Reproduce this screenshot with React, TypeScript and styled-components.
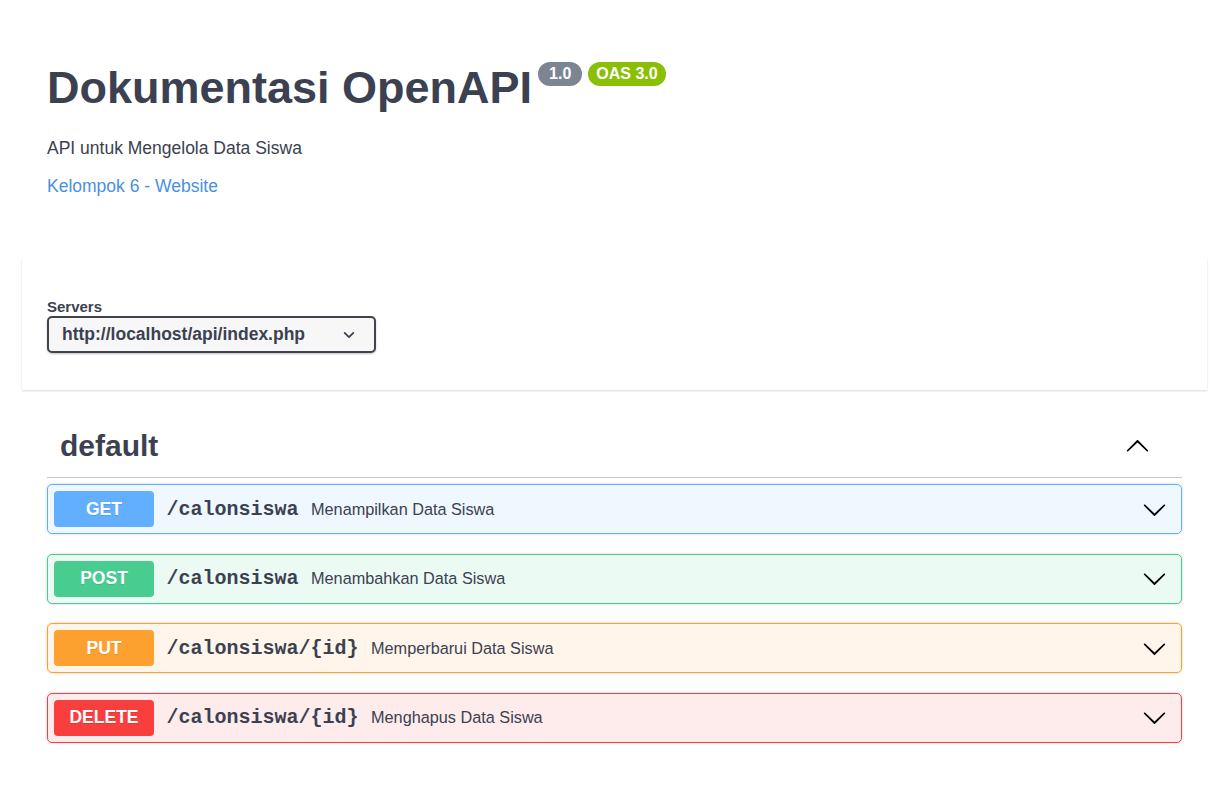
import React from "react";
import styled, { createGlobalStyle } from "styled-components";

const GlobalStyle = createGlobalStyle`
  html, body { margin: 0; padding: 0; background: #fff; }
  body { font-family: "Liberation Sans", Arial, sans-serif; color: #3b4151; }
  * { box-sizing: border-box; }
`;

const Page = styled.div`
  margin: 0 25px 0 22px;
  padding-bottom: 40px;
`;

const Info = styled.section`
  padding: 0 25px;
  margin: 62px 0 62px;
`;

const TitleRow = styled.div`
  display: flex;
  align-items: flex-start;
`;

const Title = styled.h1`
  margin: 0;
  font-size: 45px;
  line-height: 52px;
  font-weight: 700;
  color: #3b4151;
`;

const Badge = styled.span<{ $bg: string; $px: number }>`
  display: inline-block;
  margin-left: 6px;
  padding: 3px ${(p) => p.$px}px;
  border-radius: 57px;
  background: ${(p) => p.$bg};
  color: #fff;
  font-size: 16px;
  line-height: 18px;
  font-weight: 700;
`;

const Description = styled.p`
  margin: 24px 0 0;
  font-size: 17.5px;
  line-height: 20px;
  color: #3b4151;
`;

const Contact = styled.a`
  display: block;
  margin-top: 18px;
  font-size: 17.5px;
  line-height: 20px;
  color: #4990e2;
  text-decoration: none;
`;

const SchemeContainer = styled.section`
  background: #fff;
  padding: 40px 25px 37px;
  box-shadow: 0 1px 2px 0 rgba(0, 0, 0, 0.15);
`;

const ServersLabel = styled.div`
  font-size: 15px;
  line-height: 17px;
  font-weight: 700;
  color: #3b4151;
  margin-bottom: 1px;
`;

const Select = styled.div`
  display: flex;
  align-items: center;
  justify-content: space-between;
  width: 329px;
  height: 37px;
  padding: 0 18px 0 13px;
  border: 2px solid #41444e;
  border-radius: 5px;
  background: #f7f7f7;
  box-shadow: 0 1px 2px 0 rgba(0, 0, 0, 0.25);
  font-size: 17.5px;
  font-weight: 700;
  color: #3b4151;
`;

const Ops = styled.section`
  padding: 0 25px;
  margin-top: 25px;
`;

const TagHeader = styled.h3`
  display: flex;
  align-items: center;
  justify-content: space-between;
  height: 63px;
  margin: 0 0 6px;
  padding: 0 32px 0 13px;
  border-bottom: 1px solid rgba(59, 65, 81, 0.3);
  font-size: 30px;
  font-weight: 700;
  color: #3b4151;
`;

const OpBlock = styled.div<{ $color: string; $bg: string }>`
  display: flex;
  align-items: center;
  height: 50px;
  margin-bottom: 19.5px;
  padding: 0 14px 0 6px;
  border: 1px solid ${(p) => p.$color};
  border-radius: 5px;
  background: ${(p) => p.$bg};
  box-shadow: 0 0 3px 0 rgba(0, 0, 0, 0.19);
`;

const Method = styled.span<{ $color: string }>`
  flex: none;
  width: 100px;
  padding: 7.5px 0;
  border-radius: 4px;
  background: ${(p) => p.$color};
  color: #fff;
  text-align: center;
  font-size: 17.5px;
  line-height: 21px;
  font-weight: 700;
  text-shadow: 0 1px 0 rgba(0, 0, 0, 0.1);
`;

const Path = styled.span`
  padding: 0 12.5px;
  font-family: "Liberation Mono", "Courier New", monospace;
  font-size: 20px;
  font-weight: 700;
  color: #3b4151;
`;

const Summary = styled.span`
  flex: 1;
  font-size: 16.25px;
  color: #3b4151;
`;

const Arrow = styled.svg<{ $up?: boolean }>`
  flex: none;
  width: 25px;
  height: 25px;
  transform: ${(p) => (p.$up ? "rotate(180deg)" : "none")};
`;

const SmallChevron = styled.svg`
  width: 14px;
  height: 14px;
`;

const arrowPath =
  "M17.418 6.109c.272-.268.709-.268.979 0s.271.701 0 .969l-7.908 7.83c-.27.268-.707.268-.979 0l-7.908-7.83c-.27-.268-.27-.701 0-.969.271-.268.709-.268.979 0L10 13.25l7.418-7.141z";

const ArrowIcon = ({ up }: { up?: boolean }) => (
  <Arrow $up={up} viewBox="0 0 20 20" aria-hidden="true">
    <path d={arrowPath} fill="#000" />
  </Arrow>
);

type Op = {
  method: string;
  path: string;
  summary: string;
  color: string;
  bg: string;
};

const ops: Op[] = [
  { method: "GET", path: "/calonsiswa", summary: "Menampilkan Data Siswa", color: "#61affe", bg: "rgba(97,175,254,.1)" },
  { method: "POST", path: "/calonsiswa", summary: "Menambahkan Data Siswa", color: "#49cc90", bg: "rgba(73,204,144,.1)" },
  { method: "PUT", path: "/calonsiswa/{id}", summary: "Memperbarui Data Siswa", color: "#fca130", bg: "rgba(252,161,48,.1)" },
  { method: "DELETE", path: "/calonsiswa/{id}", summary: "Menghapus Data Siswa", color: "#f93e3e", bg: "rgba(249,62,62,.1)" },
];

export default function App() {
  return (
    <>
      <GlobalStyle />
      <Page>
        <Info>
          <TitleRow>
            <Title>Dokumentasi OpenAPI</Title>
            <Badge $bg="#7d8492" $px={11}>1.0</Badge>
            <Badge $bg="#89bf04" $px={8}>OAS 3.0</Badge>
          </TitleRow>
          <Description>API untuk Mengelola Data Siswa</Description>
          <Contact href="#">Kelompok 6 - Website</Contact>
        </Info>

        <SchemeContainer>
          <ServersLabel>Servers</ServersLabel>
          <Select>
            <span>http://localhost/api/index.php</span>
            <SmallChevron viewBox="0 0 16 16" aria-hidden="true">
              <path d="M3 5.5l5 5 5-5" fill="none" stroke="#3b4151" strokeWidth="2" strokeLinecap="round" strokeLinejoin="round" />
            </SmallChevron>
          </Select>
        </SchemeContainer>

        <Ops>
          <TagHeader>
            <span>default</span>
            <ArrowIcon up />
          </TagHeader>
          {ops.map((op) => (
            <OpBlock key={op.method} $color={op.color} $bg={op.bg}>
              <Method $color={op.color}>{op.method}</Method>
              <Path>{op.path}</Path>
              <Summary>{op.summary}</Summary>
              <ArrowIcon />
            </OpBlock>
          ))}
        </Ops>
      </Page>
    </>
  );
}
